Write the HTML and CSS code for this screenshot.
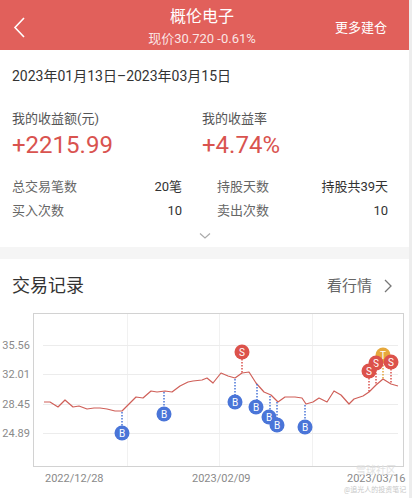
FILE: index.html
```html
<!DOCTYPE html>
<html>

<head>
    <title>概伦电子 交易详情</title>
    <link rel="stylesheet" href="styles.css">
</head>

<body>
    <div class="page">
        <div class="topbar">
            <svg class="back" width="20" height="24" viewBox="0 0 20 24">
                <polyline points="13,3 4,12.5 13,22" fill="none" stroke="#fff" stroke-width="1.6" />
            </svg>
            <div class="title">
                <div class="name">概伦电子</div>
                <div class="price">现价30.720 -0.61%</div>
            </div>
            <div class="more">更多建仓</div>
        </div>

        <div class="range">2023年01月13日–2023年03月15日</div>

        <div class="income">
            <div class="income-col">
                <div class="income-label">我的收益额(元)</div>
                <div class="income-value">+2215.99</div>
            </div>
            <div class="income-col">
                <div class="income-label">我的收益率</div>
                <div class="income-value">+4.74%</div>
            </div>
        </div>

        <div class="stats">
            <div class="stat"><span class="stat-label">总交易笔数</span><span class="stat-value">20笔</span></div>
            <div class="stat"><span class="stat-label">持股天数</span><span class="stat-value">持股共39天</span></div>
            <div class="stat"><span class="stat-label">买入次数</span><span class="stat-value">10</span></div>
            <div class="stat"><span class="stat-label">卖出次数</span><span class="stat-value">10</span></div>
        </div>

        <div class="expand">
            <svg width="12" height="8" viewBox="0 0 12 8">
                <polyline points="1,1.5 6,6 11,1.5" fill="none" stroke="#aaa" stroke-width="1.2" />
            </svg>
        </div>

        <div class="band"></div>

        <div class="section-head">
            <div class="section-title">交易记录</div>
            <div class="section-link">看行情
                <svg width="10" height="16" viewBox="0 0 10 16">
                    <polyline points="2,2 8,8 2,14" fill="none" stroke="#777" stroke-width="1.3" />
                </svg>
            </div>
        </div>

        <svg class="chart" width="409" height="199" viewBox="0 299 409 199">
            <!-- frame and grid -->
            <rect x="33.5" y="313.5" width="370" height="153" fill="#fff" stroke="#d2d2d2" />
            <g stroke="#f1f1f1">
                <line x1="127.5" y1="314" x2="127.5" y2="466" />
                <line x1="219.5" y1="314" x2="219.5" y2="466" />
                <line x1="312.5" y1="314" x2="312.5" y2="466" />
            </g>
            <g stroke="#ececec">
                <line x1="43" y1="345.5" x2="398" y2="345.5" />
                <line x1="43" y1="374.5" x2="398" y2="374.5" />
                <line x1="43" y1="404.5" x2="398" y2="404.5" />
                <line x1="43" y1="433.5" x2="398" y2="433.5" />
            </g>
            <g class="axis" text-anchor="end">
                <text x="30" y="349">35.56</text>
                <text x="30" y="378">32.01</text>
                <text x="30" y="408">28.45</text>
                <text x="30" y="437">24.89</text>
            </g>
            <g class="axis">
                <text x="45" y="482">2022/12/28</text>
                <text x="192" y="482">2023/02/09</text>
                <text x="347" y="482">2023/03/16</text>
            </g>
            <text class="mark-soft" x="356" y="474">雪球社区</text>
            <text class="mark-note" x="344" y="492">@追光人的投资笔记</text>

            <!-- price line -->
            <polyline fill="none" stroke="#cf5f58" stroke-width="1.2" stroke-linejoin="round"
                points="44,402 50,402 58,407 65,400 73,407 79,406 87,409 94,408 100,408 107,409 115,411 122,411 128,405 136,397 143,398 151,391 157,392 165,391 172,392 180,386 188,382 193,381 202,380 207,378 213,383 221,373 228,376 235,378 242,373 249,372 256,383 264,392 271,395 278,402 285,397 295,397 302,398 306,404 313,402 319,398 327,402 334,391 341,395 349,404 354,399 363,396 369,392 376,385 383,379 391,384 398,386" />

            <!-- buy markers -->
            <g stroke="#4a75d8" stroke-width="1.5" stroke-dasharray="1.5 1.5">
                <line x1="122" y1="412" x2="122" y2="426" />
                <line x1="164" y1="392" x2="164" y2="407" />
                <line x1="235" y1="379" x2="235" y2="395" />
                <line x1="257" y1="384" x2="257" y2="400" />
                <line x1="270" y1="396" x2="270" y2="410" />
                <line x1="277" y1="402" x2="277" y2="418" />
                <line x1="305" y1="405" x2="305" y2="420" />
            </g>
            <g class="buy">
                <circle cx="122" cy="433" r="7.5" /><text x="122" y="436.5">B</text>
                <circle cx="164" cy="414" r="7.5" /><text x="164" y="417.5">B</text>
                <circle cx="235" cy="402" r="7.5" /><text x="235" y="405.5">B</text>
                <circle cx="256" cy="407" r="7.5" /><text x="256" y="410.5">B</text>
                <circle cx="269" cy="417" r="7.5" /><text x="269" y="420.5">B</text>
                <circle cx="277" cy="425" r="7.5" /><text x="277" y="428.5">B</text>
                <circle cx="305" cy="427" r="7.5" /><text x="305" y="430.5">B</text>
            </g>

            <!-- sell markers -->
            <g stroke="#d9534d" stroke-width="1.5" stroke-dasharray="1.5 1.5">
                <line x1="242" y1="359" x2="242" y2="373" />
                <line x1="369" y1="378" x2="369" y2="392" />
                <line x1="376" y1="370" x2="376" y2="385" />
                <line x1="391" y1="369" x2="391" y2="384" />
            </g>
            <line x1="383" y1="362" x2="383" y2="379" stroke="#e3a43a" stroke-width="1.5" stroke-dasharray="1.5 1.5" />
            <g class="sell">
                <circle class="dot-t" cx="383" cy="355" r="7.5" /><text x="383" y="358.5">T</text>
                <circle cx="242" cy="352" r="7.5" /><text x="242" y="355.5">S</text>
                <circle cx="391" cy="362" r="7.5" /><text x="391" y="365.5">S</text>
                <circle cx="376" cy="363" r="7.5" /><text x="376" y="366.5">S</text>
                <circle cx="369" cy="371" r="7.5" /><text x="369" y="374.5">S</text>
            </g>
        </svg>
    </div>
</body>

</html>
```

FILE: styles.css
```css
* {
    box-sizing: border-box;
}

body {
    margin: 0;
    background: #ededed;
    font-family: Roboto, "Noto Sans CJK SC", sans-serif;
}

.page {
    width: 409px;
    height: 498px;
    overflow: hidden;
    background: #fff;
}

/* top bar */
.topbar {
    height: 50px;
    background: #e1605b;
    color: #fff;
    display: flex;
    align-items: center;
    padding: 0 12px 0 11px;
}

.back {
    display: block;
    width: 20px;
    margin-top: 3px;
}

.title {
    flex: 1;
    text-align: center;
    padding-left: 38px;
}

.name {
    font-size: 16px;
    line-height: 20px;
    margin-top: 4px;
}

.price {
    font-size: 13px;
    line-height: 16px;
    margin-top: 4px;
    color: rgba(255, 255, 255, 0.85);
}

.more {
    font-size: 13px;
    line-height: 20px;
    margin-top: 6px;
    margin-right: 10px;
}

/* summary */
.range {
    padding: 16px 12px 0;
    font-size: 14px;
    line-height: 20px;
    color: #333;
}

.income {
    display: flex;
    padding: 23px 12px 0;
}

.income-col {
    width: 190px;
}

.income-label {
    font-size: 13px;
    line-height: 20px;
    color: #555;
}

.income-value {
    margin-top: 2px;
    font-size: 24px;
    line-height: 28px;
    color: #d9534f;
}

.stats {
    display: grid;
    grid-template-columns: 170px 171px;
    column-gap: 35px;
    padding: 16px 0 0 12px;
}

.stat {
    display: flex;
    justify-content: space-between;
    font-size: 13px;
    line-height: 24px;
}

.stat-label {
    color: #666;
}

.stat-value {
    color: #333;
}

.expand {
    height: 24px;
    display: flex;
    justify-content: center;
    align-items: center;
    padding-top: 2px;
    padding-left: 1px;
}

.expand svg {
    display: block;
}

.band {
    height: 12px;
    background: #f5f5f5;
}

/* trade record */
.section-head {
    display: flex;
    justify-content: space-between;
    align-items: center;
    padding: 14px 16px 0 12px;
    height: 40px;
}

.section-title {
    font-size: 18px;
    line-height: 26px;
    color: #333;
}

.section-link {
    display: flex;
    align-items: center;
    gap: 11px;
    font-size: 15px;
    line-height: 26px;
    color: #666;
}

.section-link svg {
    display: block;
}

.chart {
    display: block;
}

.axis text {
    font-size: 11px;
    fill: #8a8a8a;
}

.mark-soft {
    font-size: 10px;
    fill: #e2e2e2;
}

.mark-note {
    font-size: 7px;
    fill: #c8c8c8;
}

.buy circle {
    fill: #4a75d8;
}

.sell circle {
    fill: #dc524b;
}

.sell .dot-t {
    fill: #e6a83c;
}

.buy text,
.sell text {
    font-size: 10px;
    fill: #fff;
    text-anchor: middle;
}
```
